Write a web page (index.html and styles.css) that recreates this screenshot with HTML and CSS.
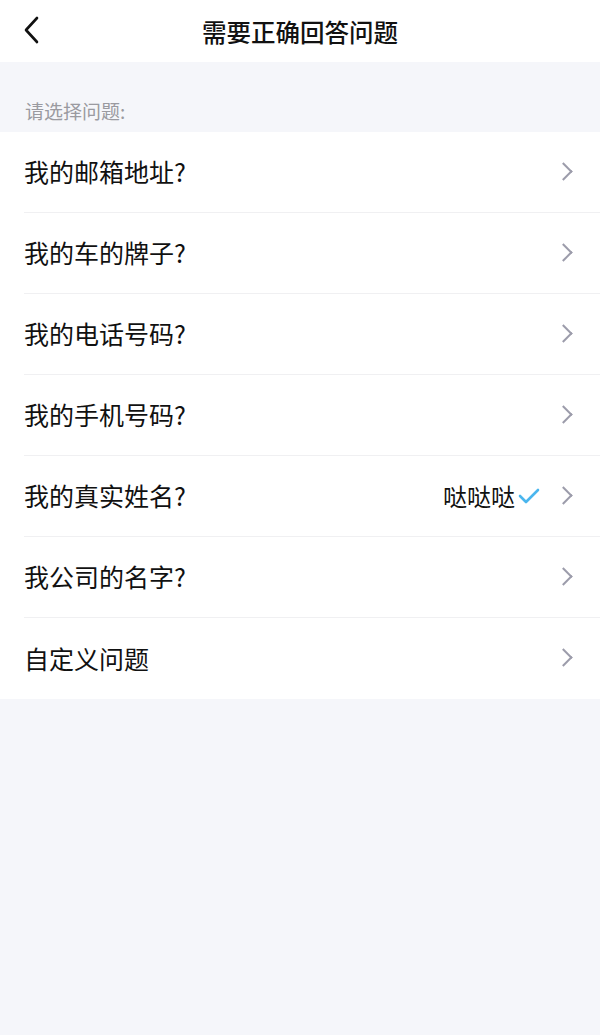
FILE: index.html
```html
<!doctype html>
<html lang="zh-CN">
<head>
    <meta charset="utf-8">
    <title>需要正确回答问题</title>
    <meta name="viewport" content="width=device-width, initial-scale=1.0">
    <link rel="stylesheet" href="styles.css">
</head>
<body>
    <header class="nav-bar">
        <span class="back-btn">
            <svg width="16" height="28" viewBox="0 0 16 28"><path d="M14 2 L3 14 L14 26" fill="none" stroke="#111" stroke-width="2.6" stroke-linecap="round" stroke-linejoin="round"/></svg>
        </span>
        <h1 class="nav-title">需要正确回答问题</h1>
    </header>
    <div class="section-label">请选择问题:</div>
    <ul class="question-list">
        <li class="question-item"><span class="question-text">我的邮箱地址?</span><span class="chevron"></span></li>
        <li class="question-item"><span class="question-text">我的车的牌子?</span><span class="chevron"></span></li>
        <li class="question-item"><span class="question-text">我的电话号码?</span><span class="chevron"></span></li>
        <li class="question-item"><span class="question-text">我的手机号码?</span><span class="chevron"></span></li>
        <li class="question-item">
            <span class="question-text">我的真实姓名?</span>
            <span class="answer">哒哒哒</span>
            <svg class="check" width="22" height="16" viewBox="0 0 22 16"><path d="M2 8 L8 14 L20 2" fill="none" stroke="#4bb6ee" stroke-width="2.6" stroke-linecap="round" stroke-linejoin="round"/></svg>
            <span class="chevron"></span>
        </li>
        <li class="question-item"><span class="question-text">我公司的名字?</span><span class="chevron"></span></li>
        <li class="question-item"><span class="question-text">自定义问题</span><span class="chevron"></span></li>
    </ul>
</body>
</html>
```

FILE: styles.css
```css
body {
    margin: 0;
    background-color: #f5f6fa;
    font-family: "Noto Sans CJK SC", "Noto Sans", sans-serif;
    color: #111;
}
.nav-bar {
    height: 62px;
    background-color: #fff;
    display: flex;
    align-items: center;
    justify-content: center;
    position: relative;
}
.back-btn {
    position: absolute;
    left: 23px;
    top: 16px;
    line-height: 0;
}
.nav-title {
    margin: 0;
    font-size: 24.5px;
    font-weight: 500;
}
.section-label {
    height: 70px;
    box-sizing: border-box;
    padding: 36px 0 0 25px;
    font-size: 19px;
    line-height: 26px;
    color: #9a9aa0;
}
.question-list {
    list-style: none;
    margin: 0;
    padding: 0 0 0 24px;
    background-color: #fff;
}
.question-item {
    height: 81px;
    display: flex;
    align-items: center;
    padding-right: 28px;
    padding-bottom: 2px;
    border-bottom: 1px solid #f0f0f2;
    box-sizing: border-box;
    font-size: 25px;
}
.question-item:last-child {
    border-bottom: none;
}
.question-text {
    flex: 1;
}
.answer {
    font-size: 24px;
}
.check {
    margin: 2px 17px 0 3px;
}
.chevron {
    width: 11px;
    height: 11px;
    border-top: 2px solid #9c9cab;
    border-right: 2px solid #9c9cab;
    transform: rotate(45deg);
    margin-right: 2px;
}
```
